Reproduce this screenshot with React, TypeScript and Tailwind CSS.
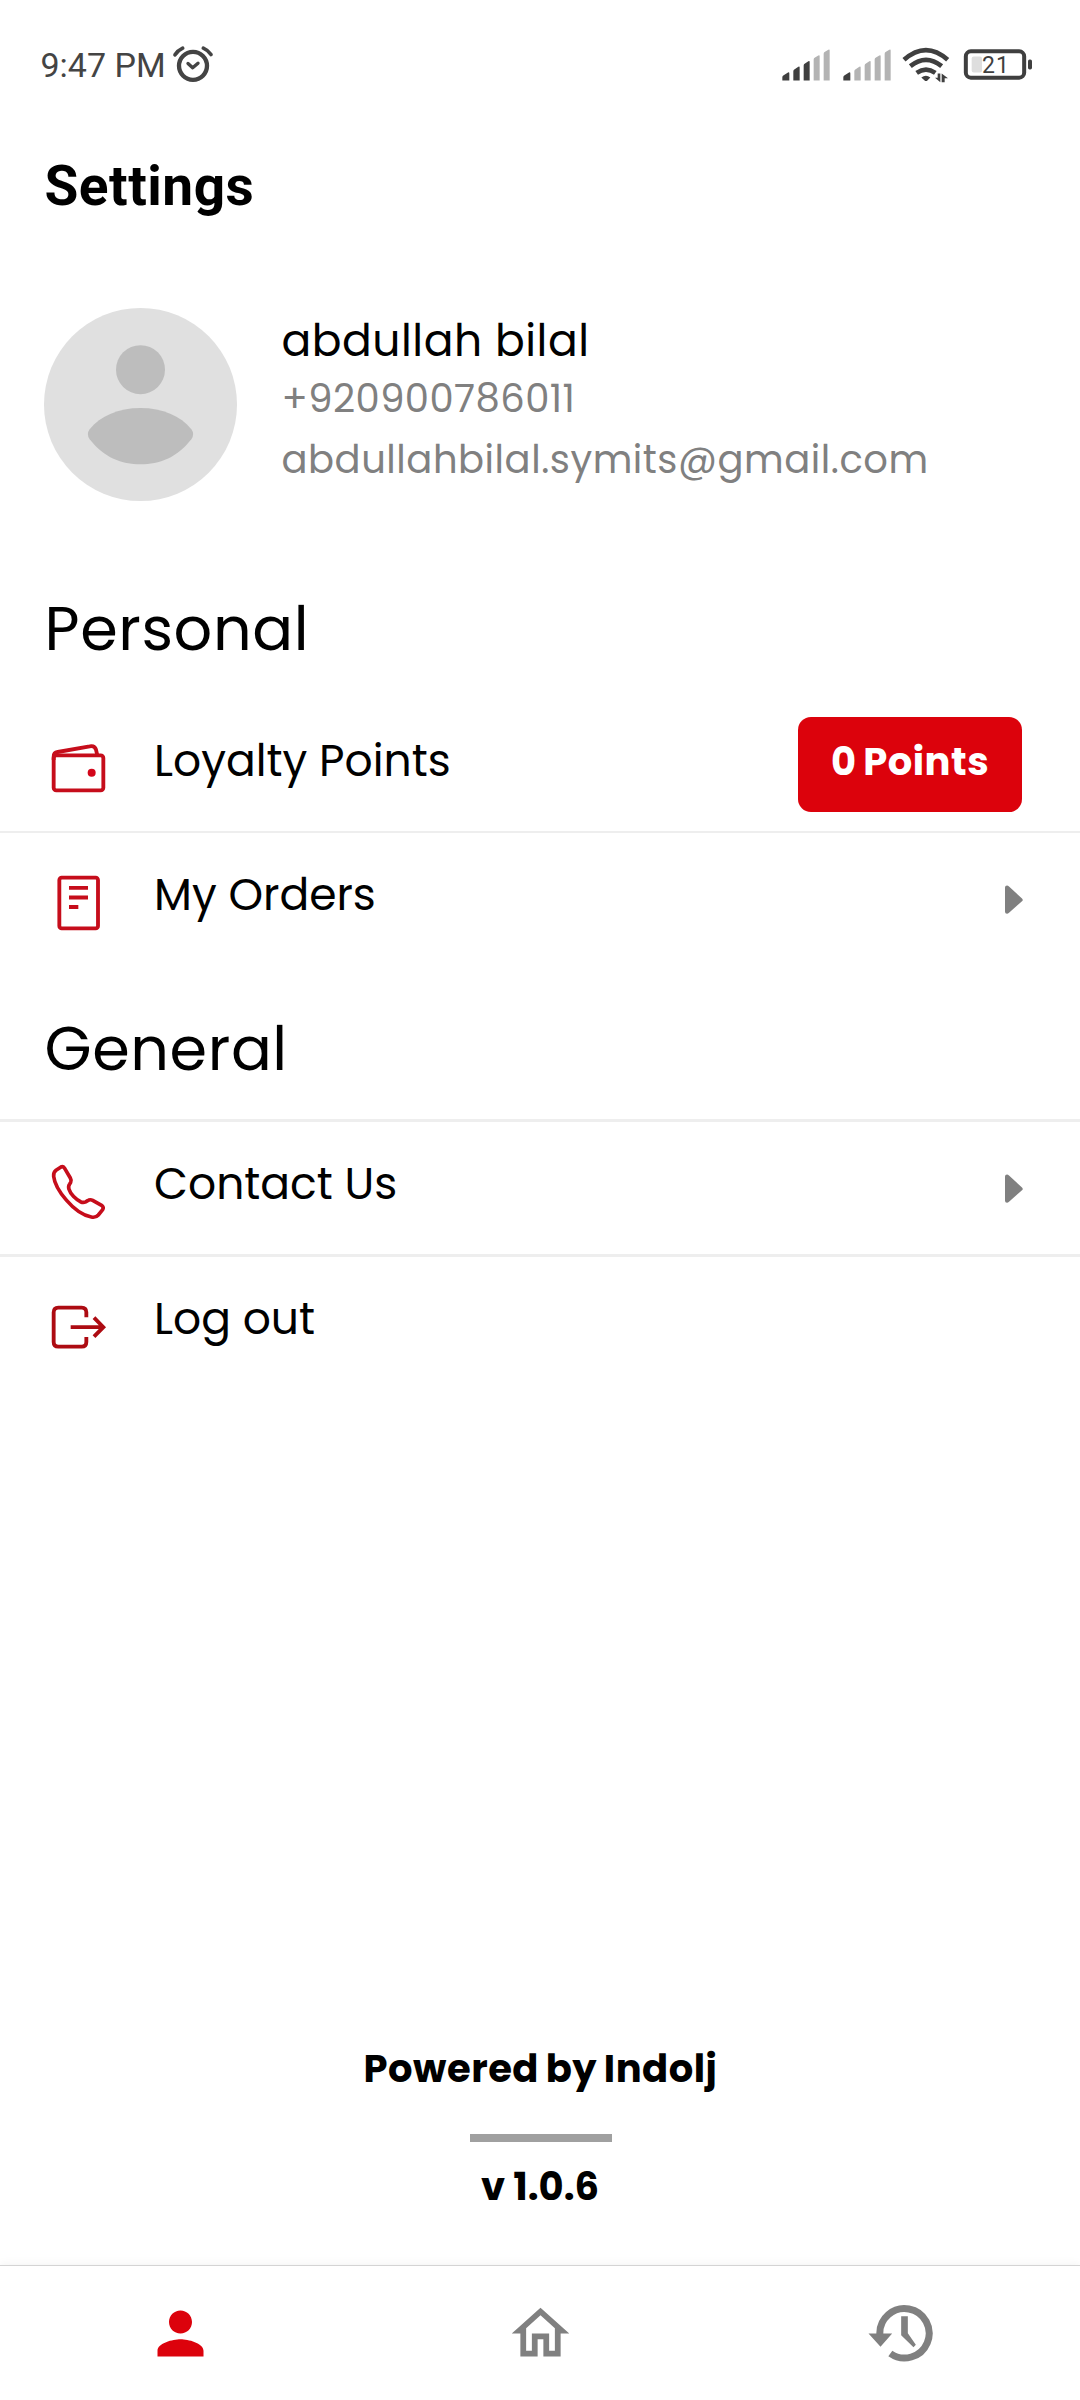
import type { ReactNode } from "react";

const BARS = [
  "M67 150V140Q67 136 71 134L84 126Q88 124 88 129V150Z",
  "M100 150V122Q100 118 104 116L115 109Q119 107 119 111V150Z",
  "M131 150V105Q131 101 135 99L145 92Q149 90 149 94V150Z",
  "M161 150V87Q161 83 165 81L175 75Q179 73 179 77V150Z",
  "M191 150V70Q191 66 195 64L205 58Q209 56 209 60V150Z",
];

function Signal({ strength }: { strength: number }) {
  return (
    <svg className="h-10 w-[50px]" viewBox="63 46.5 150 120">
      {BARS.map((d, i) => (
        <path key={d} d={d} fill={i < strength ? "#3f3f3f" : "#b3b3b3"} />
      ))}
    </svg>
  );
}

function AlarmIcon() {
  return (
    <svg className="size-[42px]" viewBox="455 43.5 126 126" fill="none" stroke="#444444" strokeLinecap="round" strokeLinejoin="round">
      <circle cx="518" cy="106" r="42" strokeWidth="13" />
      <path d="M503 99L517 112L533 98" strokeWidth="10" />
      <path d="M464 73Q472 60 487 53M549 53Q563 59 572 72" strokeWidth="11" />
    </svg>
  );
}

function WifiIcon() {
  return (
    <svg className="h-10 w-[50px]" viewBox="426 46.5 150 120" fill="none" stroke="#3f3f3f">
      <path d="M432 88Q498 30 563 88" strokeWidth="14" />
      <path d="M451 107Q498 69 545 107" strokeWidth="14" />
      <path d="M470 127Q498 108 526 127" strokeWidth="14" />
      <path d="M484 141Q498 130 511 141L503 149Q498 154 493 149Z" fill="#3f3f3f" stroke="none" />
      <path d="M541 129V155L525 142H533V129ZM545 155V129L564 143H554V155Z" fill="#3f3f3f" stroke="none" />
    </svg>
  );
}

function Battery() {
  return (
    <div className="relative h-10 w-[70px]">
      <svg className="size-full" viewBox="609 46.5 210 120">
        <rect x="617.5" y="62.5" width="175" height="79" rx="15" fill="none" stroke="#3f3f3f" strokeWidth="12" />
        <rect x="804" y="87" width="12" height="30" rx="5" fill="#3f3f3f" />
        <rect x="635" y="78" width="31" height="48" rx="6" fill="#dedede" />
      </svg>
      <span className="absolute top-0 left-[19px] text-[23px] leading-[39px] tracking-[1px] text-[#3f3f3f]">21</span>
    </div>
  );
}

function StatusBar() {
  return (
    <div className="flex h-[131px] shrink-0 items-center justify-between pr-[47px] pl-[40.5px] font-[Roboto,sans-serif]">
      <div className="flex items-center gap-[6px]">
        <span className="pb-px text-[34px] leading-[40px] font-[450] text-[#444444]">9:47 PM</span>
        <AlarmIcon />
      </div>
      <div className="flex items-center gap-[10.7px]">
        <Signal strength={3} />
        <Signal strength={1} />
        <WifiIcon />
        <Battery />
      </div>
    </div>
  );
}

function Avatar() {
  return (
    <svg className="size-[193px] shrink-0" viewBox="72 53 579 579">
      <circle cx="361.5" cy="342.5" r="289.5" fill="#e0e0e0" />
      <circle cx="361.5" cy="238" r="73.5" fill="#bdbdbd" />
      <path
        d="M361.5 353C428 353 482 377 514 417Q525 432 514 447C470 503 419 522 361.5 522C304 522 253 503 209 447Q198 432 209 417C241 377 295 353 361.5 353Z"
        fill="#bdbdbd"
      />
    </svg>
  );
}

function WalletIcon() {
  return (
    <svg className="size-[66px]" viewBox="15 48 198 198" fill="none" stroke="#c60d1b" strokeWidth="11.5">
      <rect x="41" y="106" width="149" height="105" rx="8" />
      <path d="M41 120V110Q41 98 53 96L149 79Q164 76 168 89L172 106" />
      <circle cx="155" cy="158" r="12" fill="#d3061a" stroke="none" />
    </svg>
  );
}

function OrdersIcon() {
  return (
    <svg className="size-[66px]" viewBox="15 450 198 198" fill="none" stroke="#c60d1b" strokeWidth="11.5">
      <rect x="58" y="473" width="116" height="152" rx="7" />
      <path d="M87 503.500H144M87 532.500H144M87 561H115" />
    </svg>
  );
}

function PhoneIcon() {
  return (
    <svg className="size-[66px]" viewBox="15 27 198 198" fill="none" stroke="#c60d1b" strokeWidth="11" strokeLinejoin="round">
      <path d="M63 51L48 61Q40 67 41 79C45 116 101 192 154 201Q167 204 175 195L188 179Q192 172 186 167L158 151Q150 147 143 152L137 155.500Q130 159 123 156C108 149 91 132 87 118Q84 109 89 102L92 97Q95 91 91 84L74 55Q69 48 63 51Z" />
    </svg>
  );
}

function LogoutIcon() {
  return (
    <svg className="size-[66px]" viewBox="15 432 198 198" fill="none" stroke="#ad0b12" strokeWidth="11.5">
      <path d="M139 502V487Q139 473 125 473H55Q41 473 41 487V576Q41 590 55 590H125Q139 590 139 576V561" />
      <path d="M92 531.500H190M162 503L190 531.500L162 560" />
    </svg>
  );
}

function Arrow() {
  return (
    <svg className="mt-[52px] mr-[57px] h-[30px] w-[18px]" viewBox="0 0 18 30" fill="#808080">
      <path d="M0 2.500Q0 0.500 2 0.500Q3 0.500 4 1.500L17 13.500Q18.500 15 17 16.300L4 27.800Q3 28.800 2 28.800Q0 28.800 0 26.800Z" />
    </svg>
  );
}

function Row({ icon, label, children }: { icon: ReactNode; label: string; children?: ReactNode }) {
  return (
    <div className="flex h-[132px] items-start">
      <div className="mt-[37px] mr-[43px] ml-[45px] shrink-0">{icon}</div>
      <div className="flex-1 text-[44px] leading-[123px]">{label}</div>
      {children}
    </div>
  );
}

function Navigation() {
  return (
    <nav className="grid h-[135px] shrink-0 grid-cols-3 items-center justify-items-center border-t border-[#d4d4d4] bg-white shadow-[0_-1px_9px_rgba(0,0,0,0.05)]">
      <svg className="size-[69px]" viewBox="0 0 24 24" fill="#dc020c">
        <path d="M12 12c2.210 0 4-1.790 4-4s-1.790-4-4-4-4 1.790-4 4 1.790 4 4 4zm0 2c-2.670 0-8 1.340-8 4v2h16v-2c0-2.660-5.330-4-8-4z" />
      </svg>
      <svg className="size-[69px]" viewBox="0 0 24 24" fill="#808080">
        <path d="M12 5.690l5 4.500V18h-2v-6H9v6H7v-7.810l5-4.500M12 3L2 12h3v8h6v-6h2v6h6v-8h3L12 3z" />
      </svg>
      <svg className="size-[69px]" viewBox="196.5 145.5 207 207">
        <path d="M238 251A74 74 0 1 1 269.500 309" fill="none" stroke="#808080" strokeWidth="21" />
        <path d="M204 249H275L240 289ZM302 197H322V248L346 283L339 290L302 254Z" fill="#808080" />
      </svg>
    </nav>
  );
}

export default function App() {
  return (
    <div className="flex h-[2400px] w-[1080px] flex-col overflow-hidden bg-white font-[Poppins,Inter,sans-serif] text-black">
      <StatusBar />
      <h1 className="pl-[44.5px] font-[Roboto,sans-serif] text-[55px] leading-[110px] font-bold tracking-[0.5px]">Settings</h1>

      <section className="mt-[67px] flex items-start pl-[44px]">
        <Avatar />
        <div className="pt-[4px] pl-[44.5px] text-[38.5px] tracking-[0.53px] text-[#808080]">
          <div className="text-[44px] leading-[57px] text-black">abdullah bilal</div>
          <div className="leading-[59px] tracking-[0.44px]">+920900786011</div>
          <div className="leading-[63px]">abdullahbilal.symits@gmail.com</div>
        </div>
      </section>

      <h2 className="mt-[83px] mb-[25px] pl-[44.5px] text-[60.5px] leading-[90px] tracking-[0.6px]">Personal</h2>
      <Row icon={<WalletIcon />} label="Loyalty Points">
        <div className="mt-[18px] mr-[58px] h-[95px] w-[224px] rounded-[13px] bg-[#dc020c] text-center text-[38.5px] leading-[89px] font-bold tracking-[0.5px] text-white [word-spacing:-2px]">
          0 Points
        </div>
      </Row>
      <div className="h-[2px] bg-[#eeeeee]" />
      <Row icon={<OrdersIcon />} label="My Orders">
        <Arrow />
      </Row>

      <h2 className="mt-[39px] mb-[25px] pl-[44.5px] text-[60.5px] leading-[90px] tracking-[0.6px]">General</h2>
      <div className="h-[3px] bg-[#eeeeee]" />
      <Row icon={<PhoneIcon />} label="Contact Us">
        <Arrow />
      </Row>
      <div className="h-[3px] bg-[#eeeeee]" />
      <Row icon={<LogoutIcon />} label="Log out" />

      <footer className="mt-auto mb-[49px] flex flex-col items-center text-[38.5px] leading-[58px] font-bold">
        <div className="ml-px tracking-[0.5px] [word-spacing:-2px]">Powered by Indolj</div>
        <div className="mt-[36px] mb-[16px] ml-[2px] h-[8px] w-[142px] bg-[#a0a0a0]" />
        <div>v 1.0.6</div>
      </footer>
      <Navigation />
    </div>
  );
}
